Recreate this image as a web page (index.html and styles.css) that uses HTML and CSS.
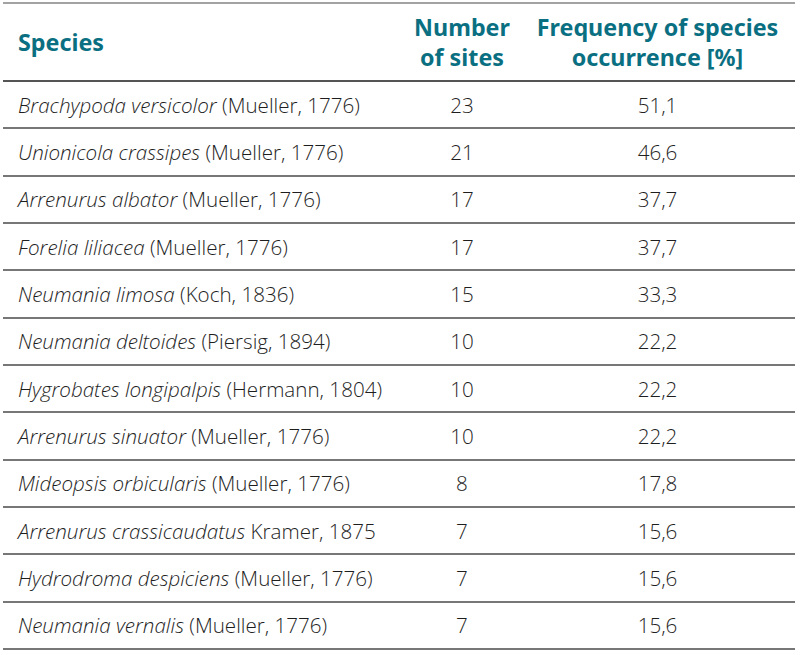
FILE: index.html
```html
<!DOCTYPE html>
<html>
<head>
<meta charset="utf-8">
<link rel="stylesheet" href="styles.css">
</head>
<body>
<table class="tbl">
  <thead>
    <tr>
      <th class="c-species">Species</th>
      <th class="c-num">Number<br>of sites</th>
      <th class="c-freq">Frequency of species<br>occurrence [%]</th>
    </tr>
  </thead>
  <tbody>
    <tr><td class="c-species"><i>Brachypoda versicolor</i> (Mueller, 1776)</td><td class="c-num">23</td><td class="c-freq">51,1</td></tr>
    <tr><td class="c-species"><i>Unionicola crassipes</i> (Mueller, 1776)</td><td class="c-num">21</td><td class="c-freq">46,6</td></tr>
    <tr><td class="c-species"><i>Arrenurus albator</i> (Mueller, 1776)</td><td class="c-num">17</td><td class="c-freq">37,7</td></tr>
    <tr><td class="c-species"><i>Forelia liliacea</i> (Mueller, 1776)</td><td class="c-num">17</td><td class="c-freq">37,7</td></tr>
    <tr><td class="c-species"><i>Neumania limosa</i> (Koch, 1836)</td><td class="c-num">15</td><td class="c-freq">33,3</td></tr>
    <tr><td class="c-species"><i>Neumania deltoides</i> (Piersig, 1894)</td><td class="c-num">10</td><td class="c-freq">22,2</td></tr>
    <tr><td class="c-species"><i>Hygrobates longipalpis</i> (Hermann, 1804)</td><td class="c-num">10</td><td class="c-freq">22,2</td></tr>
    <tr><td class="c-species"><i>Arrenurus sinuator</i> (Mueller, 1776)</td><td class="c-num">10</td><td class="c-freq">22,2</td></tr>
    <tr><td class="c-species"><i>Mideopsis orbicularis</i> (Mueller, 1776)</td><td class="c-num">8</td><td class="c-freq">17,8</td></tr>
    <tr><td class="c-species"><i>Arrenurus crassicaudatus</i> Kramer, 1875</td><td class="c-num">7</td><td class="c-freq">15,6</td></tr>
    <tr><td class="c-species"><i>Hydrodroma despiciens</i> (Mueller, 1776)</td><td class="c-num">7</td><td class="c-freq">15,6</td></tr>
    <tr><td class="c-species"><i>Neumania vernalis</i> (Mueller, 1776)</td><td class="c-num">7</td><td class="c-freq">15,6</td></tr>
  </tbody>
</table>
</body>
</html>
```
FILE: styles.css
```css
html, body {
  margin: 0;
  padding: 0;
  background: #ffffff;
}
body {
  padding: 2px 5px 0 3px;
  font-family: "Noto Sans", "Open Sans", sans-serif;
  color: #222222;
}
.tbl {
  width: 792px;
  border-collapse: collapse;
  border-top: 2px solid #a3a3a3;
}
.tbl th {
  color: #0b6f82;
  font-weight: 700;
  font-size: 23.3px;
  line-height: 30px;
  height: 76px;
  padding: 0;
  border-bottom: 2px solid #555555;
  vertical-align: middle;
}
.tbl td {
  font-family: "Open Sans", "Noto Sans", sans-serif;
  font-weight: 300;
  font-size: 20.6px;
  height: 45.33px;
  padding: 0;
  border-bottom: 2px solid #777777;
  vertical-align: middle;
  color: #1e1e1e;
}
.c-species {
  text-align: left;
  padding-left: 15px !important;
  width: 386px;
}
.c-num {
  text-align: center;
  width: 116px;
}
.c-freq {
  text-align: center;
}
```
